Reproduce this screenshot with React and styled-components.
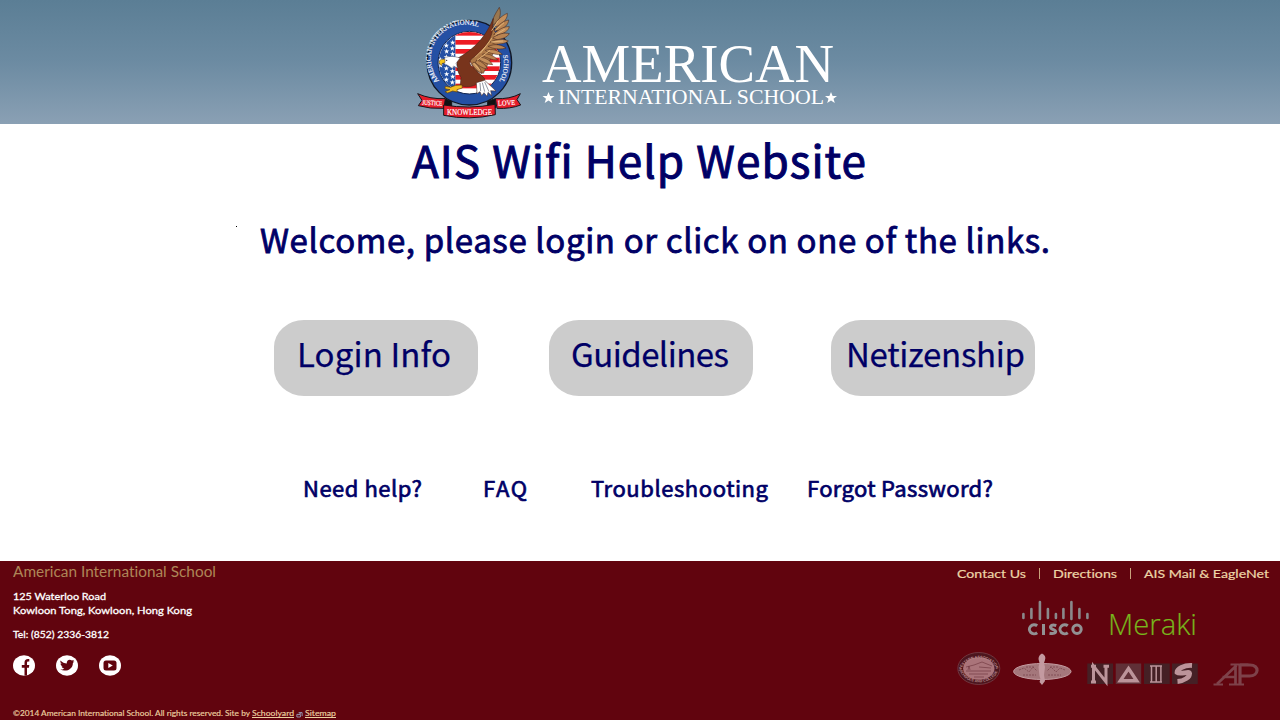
import React, { useLayoutEffect, useRef, useState } from "react";
import styled, { createGlobalStyle } from "styled-components";

const GlobalStyle = createGlobalStyle`
  * { box-sizing: border-box; }
  body { margin: 0; background: #fff; overflow: hidden; }
  a { color: inherit; text-decoration: none; }
`;

const humanist = `"Noto Sans CJK SC", "Open Sans", sans-serif`;
const navy = "#000066";

const Page = styled.div`
  width: 1280px;
  height: 720px;
  display: flex;
  flex-direction: column;
  font-family: ${humanist};
  color: ${navy};
`;

const Header = styled.header`
  height: 124px;
  flex: none;
  display: flex;
  padding-left: 400px;
  background: linear-gradient(#5b7e95, #6c8ba2 50%, #8aa0b4);
`;

const Main = styled.main`
  flex: 1;
  display: flex;
  flex-direction: column;
`;

const Title = styled.h1`
  margin: 0;
  padding-left: 412px;
  font-size: 44px;
  font-weight: 400;
  line-height: 70px;
  height: 69px;
  -webkit-text-stroke: 1px ${navy};
`;

const Welcome = styled.h2`
  margin: 0;
  padding-left: 236px;
  display: flex;
  gap: 23px;
  font-size: 33px;
  font-weight: 400;
  line-height: 92px;
  height: 127px;
  -webkit-text-stroke: 0.8px ${navy};
`;

const Speck = styled.span`
  width: 1px;
  height: 1px;
  margin-top: 33px;
  background: #000;
`;

const ButtonRow = styled.nav`
  display: flex;
  padding-left: 274px;
  height: 76px;
`;

const PillButton = styled.a`
  width: 204px;
  height: 76px;
  margin-right: ${(p) => p.$gap}px;
  padding-left: ${(p) => p.$inset}px;
  border-radius: 30px / 27px;
  background: #ccc;
  font-size: 33px;
  line-height: 66px;
  -webkit-text-stroke: 0.25px ${navy};
`;

const LinkRow = styled.nav`
  display: flex;
  margin-top: 71px;
  padding-left: 303px;
  font-size: 22px;
  line-height: 41px;
  -webkit-text-stroke: 0.7px ${navy};
`;

const HelpLink = styled.a`
  margin-right: ${(p) => p.$gap}px;
`;

const Footer = styled.footer`
  height: 159px;
  flex: none;
  display: flex;
  justify-content: space-between;
  background: #61040e;
  font-family: Lato, "Open Sans", sans-serif;
  letter-spacing: 0.01px;
  color: #fff;
`;

const Contact = styled.div`
  display: flex;
  flex-direction: column;
  width: 400px;
  padding-left: 12.5px;
`;

const SchoolName = styled.div`
  height: 28px;
  font-size: 14.5px;
  line-height: 22px;
  color: #ae8657;
`;

const Address = styled.div`
  font-size: 10.2px;
  line-height: 14px;
  height: ${(p) => p.$height}px;
  -webkit-text-stroke: 0.3px #fff;
`;

const Social = styled.div`
  display: flex;
  gap: 21px;
  height: 52px;
`;

const Legal = styled.div`
  display: flex;
  font-size: 7.8px;
  line-height: 13px;
  gap: 2px;
  color: #ecd0a0;
  -webkit-text-stroke: 0.15px #ecd0a0;
`;

const LegalLink = styled.a`
  span span { text-decoration: underline; }
`;

const Partners = styled.div`
  width: 323px;
  display: flex;
  flex-direction: column;
`;

const FooterNav = styled.nav`
  display: flex;
  align-items: center;
  height: 25px;
  color: #edd5a7;
  font-size: 11.3px;
  -webkit-text-stroke: 0.2px #edd5a7;
`;

const Divider = styled.span`
  width: 1px;
  height: 11px;
  margin: 0 13px;
  background: #c9a37c;
`;

const Fitted = styled.span`
  display: inline-block;
  white-space: pre;
  transform-origin: 0 50%;
`;

const FitBox = styled.span`
  display: inline-block;
  white-space: nowrap;
  vertical-align: top;
  width: ${(p) => p.$width}px;
`;

/* Spreads one line of text over a fixed width, by tracking or by stretching. */
function Fit({ width, stretch, children }) {
  const ref = useRef(null);
  const [style, setStyle] = useState({});
  useLayoutEffect(() => {
    const exact = ref.current.getBoundingClientRect().width;
    setStyle(
      stretch
        ? { transform: `scaleX(${width / exact})` }
        : { letterSpacing: `${(width - exact) / (children.length - 1)}px` }
    );
  }, []);
  return (
    <FitBox $width={width}>
      <Fitted ref={ref} style={style}>{children}</Fitted>
    </FitBox>
  );
}

const stars = [];
for (let row = 0; row < 9; row++) {
  for (let col = 0; col < 4; col++) {
    const x = 122 + col * 18 - (row % 2) * 1;
    const y = 120 + row * 17 + (col % 2 ? 0 : 8);
    if (Math.hypot(x - 208, y - 188) < 88 && x < 164) stars.push([x, y]);
  }
}
const STAR = "M0-8 2-2.6 8-2.6 3.2 1.2 5 7 0 3.4-5 7-3.2 1.2-8-2.6-2-2.6Z";

const feathers = [
  "M276 78C276 55 287 40 298 22C304 36 300 50 296 62Z",
  "M280 82C290 60 304 48 322 40C323 55 313 65 300 76Z",
  "M282 92C296 72 310 63 326 60C325 75 312 84 298 92Z",
  "M281 103C298 86 314 79 328 80C325 94 309 101 296 105Z",
  "M277 114C296 101 313 97 328 101C321 113 306 117 291 119Z",
  "M271 126C292 116 310 116 325 123C314 132 299 132 285 132Z",
  "M264 139C286 130 304 134 318 144C304 149 289 147 276 144Z",
  "M256 151C278 145 294 151 307 163C291 166 276 160 264 157Z",
  "M248 162C268 160 283 168 293 180C276 181 261 173 250 168Z",
  "M240 172C257 172 271 182 278 194C260 194 246 184 238 179Z",
  "M230 180C246 184 256 194 263 207C247 206 235 196 226 188Z",
  "M222 186C235 194 242 207 245 221C232 214 222 202 215 192Z",
];

function Crest() {
  return (
    <svg width="140" height="124" viewBox="0 0 420 372">
      <defs>
        <path id="arcTop" d="M118 243A102 102 0 0 1 271 108" />
        <path id="arcRight" d="M309 166A103 103 0 0 1 286 258" />
        <clipPath id="field"><circle cx="208" cy="188" r="92" /></clipPath>
      </defs>
      <circle cx="208" cy="188" r="127" fill="#2450a4" stroke="#101726" strokeWidth="4" />
      <circle cx="208" cy="188" r="94" fill="#fff" stroke="#14264f" strokeWidth="3" />
      <g clipPath="url(#field)">
        {[93, 120, 147, 173, 199, 225, 251].map((y) => (
          <rect key={y} x="166" y={y} width="140" height="14" fill="#ec1c24" />
        ))}
        <rect x="112" y="90" width="54" height="190" fill="#2450a4" />
        {stars.map(([x, y]) => (
          <path key={`${x}-${y}`} d={STAR} transform={`translate(${x} ${y})`} fill="#fff" />
        ))}
      </g>
      <g fill="#f3f5fa" stroke="#f3f5fa" strokeWidth="0.5" fontFamily="Liberation Serif, serif">
        <text fontSize="21" letterSpacing="-0.5"><textPath href="#arcTop">AMERICAN INTERNATIONAL</textPath></text>
        <text fontSize="20"><textPath href="#arcRight">SCHOOL</textPath></text>
      </g>
      <g stroke="#422218" strokeWidth="1.6" strokeLinejoin="round">
        <path d="M275 80C252 112 238 142 205 174L226 212L250 220L300 118Z" fill="#ad7746" />
        {feathers.map((d, i) => (
          <path key={i} d={d} fill={i === 0 ? "#9a774f" : i % 2 ? "#c48f5b" : "#b98350"} />
        ))}
        <path d="M280 55C264 92 239 139 174 174C166 198 174 218 183 232L181 254C196 265 217 260 232 252C244 258 255 249 254 236C242 222 238 222 222 205C207 193 205 184 218 174C248 154 274 122 278 88Z" fill="#78341c" />
        <path d="M229 248L231 281L240 275L245 287L252 278L261 289L264 277L275 287L272 272L288 273L270 256L254 241Z" fill="#fff" />
      </g>
      <path d="M240 249L242 273M247 248L254 275M254 246L267 275" stroke="#596171" strokeWidth="2" />
      <path d="M225 172L258 139M231 181L270 151M222 190L240 211M241 160L277 113M275 92L295 62M286 91L312 68M284 106L314 88M273 126L309 123" stroke="#e3b477" strokeWidth="3" fill="none" />
      <path d="M131 179C137 166 162 168 180 174L168 190L173 204L160 198L158 206L145 197L131 190Z" fill="#fff" stroke="#3b435a" strokeWidth="1.2" />
      <path d="M135 178C124 176 117 180 117 188L124 197L127 190L135 188Z" fill="#f5c51b" stroke="#553713" strokeWidth="1.5" />
      <circle cx="140" cy="181" r="2" fill="#222" />
      <path d="M186 255L167 256L151 262L136 259L135 266L150 269L135 275L143 279L158 273L172 276L171 269L187 264Z" fill="#f3bf24" stroke="#5b3b12" strokeWidth="2" />
      <g stroke="#15151a" strokeWidth="3" strokeLinejoin="round">
        <path d="M132 296L155 304L155 319L132 324ZM286 296L263 304L263 319L286 324Z" fill="#111" />
        <path d="M53 281Q91 298 136 296L132 325Q90 327 55 317L66 301Z" fill="#e51d2b" />
        <path d="M361 281Q330 298 286 296L291 325Q331 327 362 315L351 299Z" fill="#e51d2b" />
        <path d="M131 315Q208 328 285 313L286 344Q208 362 131 346Z" fill="#e51d2b" />
      </g>
      <g fill="#fff" stroke="#fff" strokeWidth="0.5" fontFamily="Liberation Serif, serif">
        <text x="66" y="314" fontSize="20" textLength="61" lengthAdjust="spacingAndGlyphs" transform="rotate(3 66 314)">JUSTICE</text>
        <text x="141" y="344" fontSize="24" textLength="135" lengthAdjust="spacingAndGlyphs">KNOWLEDGE</text>
        <text x="294" y="317" fontSize="22" textLength="52" lengthAdjust="spacingAndGlyphs" transform="rotate(-3 294 317)">LOVE</text>
      </g>
    </svg>
  );
}

function Wordmark() {
  const star = "M0-6 1.6-1.9 6-1.9 2.5.8 3.8 5 0 2.6-3.8 5-2.5.8-6-1.9-1.6-1.9Z";
  return (
    <svg width="310" height="124" viewBox="540 0 310 124" fill="#fff" fontFamily="Liberation Serif, serif">
      <text x="542" y="82" fontSize="55" textLength="292" lengthAdjust="spacingAndGlyphs">AMERICAN</text>
      <text x="558" y="104" fontSize="20.5" textLength="266" lengthAdjust="spacingAndGlyphs">INTERNATIONAL SCHOOL</text>
      <path d={star} transform="translate(548.5 98)" />
      <path d={star} transform="translate(831 98)" />
    </svg>
  );
}

function SocialIcon({ children }) {
  return (
    <svg width="22" height="21" viewBox="0 0 22 21">
      <ellipse cx="11" cy="10.5" rx="11" ry="10.2" fill="#fff" />
      {children}
    </svg>
  );
}

function ExternalMark() {
  return (
    <svg width="7" height="13" viewBox="0 0 8 13" fill="none" stroke="#99a5c4" strokeWidth="1">
      <path d="M1 7.5h4v3H1zM3 5.5h4v4M3 8l3-2.5" />
    </svg>
  );
}

function PartnerLogos() {
  const bars = [[1023, 614, 4], [1031, 609, 9], [1039.5, 602, 17], [1047.5, 609, 9], [1055.5, 614, 4], [1063, 609, 9], [1071, 602, 17], [1079, 609, 9], [1087, 614, 4]];
  return (
    <svg width="323" height="134" viewBox="957 586 323 134">
      {bars.map(([x, y, h]) => (
        <path key={x} d={`M${x + 0.4} ${y}v${h}`} stroke="#8a898b" strokeWidth="2.6" strokeLinecap="round" />
      ))}
      <g fill="none" stroke="#929193" strokeWidth="3">
        <path d="M1037.2 625.8A4.8 4.5 0 1 0 1037.2 632.8M1043.5 624v11M1056.3 625.5C1050 623.6 1048.8 628 1052.5 629.2C1058 631 1056 634.4 1049.5 633.2M1067.8 625.8A4.8 4.5 0 1 0 1067.8 632.8" />
        <circle cx="1077" cy="629.3" r="4.2" />
      </g>
      <text x="1108" y="635" fontFamily="Open Sans, sans-serif" fontWeight="300" fontSize="29.5" textLength="89" lengthAdjust="spacingAndGlyphs" fill="#78b51d" stroke="#78b51d" strokeWidth="0.2">Meraki</text>

      <ellipse cx="978.8" cy="668.5" rx="21" ry="16" fill="#4c151d" stroke="#7b4850" strokeWidth="0.7" />
      <ellipse cx="978.8" cy="668.5" rx="15.7" ry="11.3" fill="#aa747a" />
      <path d="M966 667l8-2 8-3 10 4M966 671h25M969 674h19M974 677h10M968 670l1-4 1 4M979 667l12 1" stroke="#693039" strokeWidth="0.6" fill="none" />
      <path id="sealTop" d="M961.5 671A17.3 12.6 0 1 1 996.2 671" fill="none" />
      <path id="sealBottom" d="M960 670.5A19.2 14.3 0 0 0 997.8 670.5" fill="none" />
      <g fontFamily="Liberation Sans, sans-serif" fontWeight="700" fontSize="3.7" fill="#b98a8e">
        <text><textPath href="#sealTop">WESTERN ASSOCIATION OF</textPath></text>
        <text><textPath href="#sealBottom">SCHOOLS AND COLLEGES</textPath></text>
      </g>

      <ellipse cx="1042.3" cy="671.5" rx="28.7" ry="8" fill="#a4777b" stroke="#c39ba0" strokeWidth="1" />
      <path d="M1019 670l5-2 5 4 4-5 4 4M1065 670l-5-2-4 4-5-5-4 4M1023 675h13M1048 675h13M1026 667h8M1050 667h9" fill="none" stroke="#7f4b52" strokeWidth="0.9" strokeDasharray="2 1" />
      <path d="M1038.5 659q0-4 3.5-5.500q4.500 2 3 6.500l-1 3 1 4-1 8 .5 3 .5 3-3 4-2.500-3 1-3-1-3-1-9 1-4z" fill="#c39aa0" />

      {[1087.3, 1115.7, 1144, 1172].map((x, i) => (
        <rect key={x} x={x} y="663.5" width={i === 1 ? 25.5 : 25.8} height="20.5" fill={i === 1 ? "#603037" : "#452025"} />
      ))}
      <path d="M1093.500 682v-16l12.500 16v-16M1091 666.2h5M1103.500 666.2h5.500M1091 682h5" fill="none" stroke="#bc949a" strokeWidth="3" />
      <path d="M1128.5 668.5l8.200 12.300h-16.400z" fill="none" stroke="#bc949a" strokeWidth="3.4" />
      <path d="M1150 666h12M1150 682h12M1151.500 666v16M1156.200 666v16M1160.900 666v16" stroke="#bc949a" strokeWidth="1.5" />
      <path d="M1192 665.500C1184 665 1177 669 1177 672.500C1180 675 1190 670.500 1189.500 673.500C1190 677 1184 681 1177.500 681.500" fill="none" stroke="#bc949a" strokeWidth="4.8" />

      <g fill="none" stroke="#7e424a">
        <path d="M1217 684L1236.500 665.500M1235.500 664v20M1222.500 677h13" strokeWidth="2.7" />
        <path d="M1213.500 684.500h9.500M1229 684.500h15M1230.500 664.500h18" strokeWidth="2" />
        <path d="M1240 664.500v20M1240 665h10C1260 665 1259 676 1249.500 676H1240" strokeWidth="3.2" />
      </g>
    </svg>
  );
}

export default function App() {
  return (
    <Page>
      <GlobalStyle />
      <Header>
        <Crest />
        <Wordmark />
      </Header>
      <Main>
        <Title><Fit width={454}>AIS Wifi Help Website</Fit></Title>
        <Welcome>
          <Speck />
          <Fit width={790}>Welcome, please login or click on one of the links.</Fit>
        </Welcome>
        <ButtonRow>
          <PillButton href="#login" $gap={71} $inset={23}><Fit width={154}>Login Info</Fit></PillButton>
          <PillButton href="#guidelines" $gap={78} $inset={22}><Fit width={158}>Guidelines</Fit></PillButton>
          <PillButton href="#netizenship" $gap={0} $inset={15}><Fit width={179}>Netizenship</Fit></PillButton>
        </ButtonRow>
        <LinkRow>
          <HelpLink href="#help" $gap={61}><Fit width={119}>Need help?</Fit></HelpLink>
          <HelpLink href="#faq" $gap={64}><Fit width={44}>FAQ</Fit></HelpLink>
          <HelpLink href="#troubleshooting" $gap={39}><Fit width={177}>Troubleshooting</Fit></HelpLink>
          <HelpLink href="#password" $gap={0}><Fit width={186}>Forgot Password?</Fit></HelpLink>
        </LinkRow>
      </Main>
      <Footer>
        <Contact>
          <SchoolName><Fit width={203} stretch>American International School</Fit></SchoolName>
          <Address $height={14}><Fit width={93} stretch>125 Waterloo Road</Fit></Address>
          <Address $height={24}><Fit width={179} stretch>Kowloon Tong, Kowloon, Hong Kong</Fit></Address>
          <Address $height={28}><Fit width={96} stretch>Tel: (852) 2336-3812</Fit></Address>
          <Social>
            <SocialIcon>
              <path d="M11.5 20.5v-7.7H8.8V9.9h2.7V7.7c0-2.8 1.5-4 4.8-3.6v2.5c-1.8-.1-2.3.1-2.3 1.5v1.8h2.3l-.4 2.9H14v7.7z" fill="#61040e" />
            </SocialIcon>
            <SocialIcon>
              <path d="M4.5 5.5c1.8 2 3.9 3 6.3 3.1C10.3 4.7 14 3.7 15.9 5.6l2.1-.7-1.2 1.8 1.6-.4-1.5 1.6c0 6-6.4 9.6-12.7 6.7 1.7.1 3-.3 4.1-1.2-1.5-.2-2.3-.9-2.7-2h1.2c-1.5-.7-2.2-1.7-2.3-3l1.3.4C4.4 7.8 4.1 6.8 4.5 5.5z" fill="#61040e" />
            </SocialIcon>
            <SocialIcon>
              <rect x="4.5" y="5.5" width="13" height="10" rx="2.5" fill="#61040e" />
              <path d="M9.3 8v5l4.5-2.5z" fill="#fff" />
            </SocialIcon>
          </Social>
          <Legal>
            <Fit width={237} stretch>©2014 American International School. All rights reserved. Site by</Fit>
            <LegalLink href="#schoolyard"><Fit width={42} stretch>Schoolyard</Fit></LegalLink>
            <ExternalMark />
            <LegalLink href="#sitemap"><Fit width={31} stretch>Sitemap</Fit></LegalLink>
          </Legal>
        </Contact>
        <Partners>
          <FooterNav>
            <a href="#contact"><Fit width={69} stretch>Contact Us</Fit></a>
            <Divider />
            <a href="#directions"><Fit width={64} stretch>Directions</Fit></a>
            <Divider />
            <a href="#mail"><Fit width={125} stretch>AIS Mail &amp; EagleNet</Fit></a>
          </FooterNav>
          <PartnerLogos />
        </Partners>
      </Footer>
    </Page>
  );
}
